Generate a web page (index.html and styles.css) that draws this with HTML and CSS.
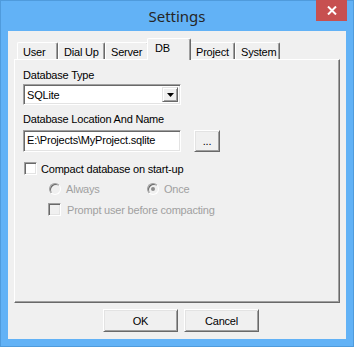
FILE: index.html
```html
<!DOCTYPE html>
<html lang="en">

<head>
  <meta charset="UTF-8">
  <title>Settings</title>
  <link rel="stylesheet" href="styles.css">
</head>

<body>
  <div class="window">
    <div class="titlebar">
      <span class="title">Settings</span>
      <div class="close">
        <svg width="10" height="9" viewBox="0 0 10 9">
          <path d="M1 0.5 L9 8.5 M9 0.5 L1 8.5" stroke="#fff" stroke-width="2" />
        </svg>
      </div>
    </div>
    <div class="client">
      <div class="tabs">
        <div class="tab tab-user">User</div>
        <div class="tab tab-dial">Dial Up</div>
        <div class="tab tab-server">Server</div>
        <div class="tab tab-db selected">DB</div>
        <div class="tab tab-project">Project</div>
        <div class="tab tab-system">System</div>
      </div>
      <div class="panel">
        <div class="label">Database Type</div>
        <div class="combo">
          <span class="combo-value">SQLite</span>
          <span class="combo-btn">
            <svg width="7" height="4" viewBox="0 0 7 4"><path d="M0 0 H7 L3.5 4 Z" fill="#000" /></svg>
          </span>
        </div>
        <div class="label label-path">Database Location And Name</div>
        <div class="path-row">
          <div class="textbox">E:\Projects\MyProject.sqlite</div>
          <div class="btn btn-browse">...</div>
        </div>
        <div class="check-row">
          <span class="checkbox"></span>
          <span>Compact database on start-up</span>
        </div>
        <div class="radio-row disabled">
          <div class="radio-item">
            <span class="radio"></span>
            <span>Always</span>
          </div>
          <div class="radio-item">
            <span class="radio checked"></span>
            <span>Once</span>
          </div>
        </div>
        <div class="check-row sub disabled">
          <span class="checkbox"></span>
          <span>Prompt user before compacting</span>
        </div>
      </div>
      <div class="buttons">
        <div class="btn btn-dialog">OK</div>
        <div class="btn btn-dialog">Cancel</div>
      </div>
    </div>
  </div>
</body>

</html>
```

FILE: styles.css
```css
body {
  margin: 0;
  font-family: 'Liberation Sans', Arial, sans-serif;
  font-size: 11px;
  letter-spacing: -0.2px;
  color: #000;
}

.window {
  width: 354px;
  height: 347px;
  box-sizing: border-box;
  border: 1px solid #4f9bdc;
  background-color: #62b2f6;
}

.titlebar {
  position: relative;
  height: 30px;
  text-align: center;
}

.title {
  font-family: 'Noto Sans', 'Open Sans', sans-serif;
  font-size: 15px;
  letter-spacing: 0;
  line-height: 30px;
  color: #262626;
}

.close {
  position: absolute;
  top: -1px;
  right: 6px;
  width: 31px;
  height: 21px;
  background-color: #c75050;
  display: flex;
  align-items: center;
  justify-content: center;
}

.client {
  margin: 0 7px;
  height: 308px;
  background-color: #f0f0f0;
}

/* Tabs */
.tabs {
  display: flex;
  align-items: flex-end;
  height: 28px;
  padding-left: 9px;
  position: relative;
  z-index: 1;
}

.tab {
  height: 17px;
  box-sizing: border-box;
  padding: 3px 0 0 5px;
  line-height: 13px;
  background-color: #f0f0f0;
  border-top: 1px solid #fff;
  border-left: 1px solid #fff;
  border-right: 1px solid #696969;
  box-shadow: inset -1px 0 0 #a0a0a0;
  border-radius: 2px 2px 0 0;
}

.tab-user { width: 41px; }
.tab-dial { width: 47px; }
.tab-server { width: 44px; }
.tab-project { width: 46px; padding-left: 6px; }
.tab-system { width: 45px; }

.tab.selected {
  width: 44px;
  height: 22px;
  margin: 0 -2px -1px;
  padding: 3px 0 0 7px;
  position: relative;
  z-index: 2;
}

/* Panel */
.panel {
  margin: 0 6px;
  height: 244px;
  box-sizing: border-box;
  padding: 9px 0 0 8px;
  border-top: 1px solid #fff;
  border-left: 1px solid #fff;
  border-right: 1px solid #696969;
  border-bottom: 1px solid #696969;
  box-shadow: inset -1px -1px 0 #a0a0a0;
}

.label {
  line-height: 13px;
  margin-bottom: 2px;
}

.label-path {
  margin-top: 8px;
  margin-bottom: 4px;
}

.combo {
  width: 158px;
  height: 21px;
  box-sizing: border-box;
  display: flex;
  align-items: center;
  background-color: #fff;
  border: 1px solid;
  border-color: #a0a0a0 #fff #fff #a0a0a0;
  box-shadow: inset 1px 1px 0 #696969, inset -1px -1px 0 #e3e3e3;
  padding: 2px;
}

.combo-value {
  flex: 1;
  padding-left: 1px;
}

.combo-btn {
  width: 16px;
  height: 15px;
  box-sizing: border-box;
  display: flex;
  align-items: center;
  justify-content: center;
  background-color: #f0f0f0;
  border: 1px solid;
  border-color: #e3e3e3 #696969 #696969 #e3e3e3;
  box-shadow: inset 1px 1px 0 #fff, inset -1px -1px 0 #a0a0a0;
}

.path-row {
  display: flex;
  align-items: center;
  gap: 13px;
}

.textbox {
  width: 158px;
  height: 22px;
  box-sizing: border-box;
  line-height: 18px;
  padding-left: 3px;
  background-color: #fff;
  border: 1px solid;
  border-color: #a0a0a0 #fff #fff #a0a0a0;
  box-shadow: inset 1px 1px 0 #696969, inset -1px -1px 0 #e3e3e3;
}

.btn {
  box-sizing: border-box;
  display: flex;
  align-items: center;
  justify-content: center;
  background-color: #f0f0f0;
  border: 1px solid;
  border-color: #fff #696969 #696969 #fff;
  box-shadow: inset 1px 1px 0 #e3e3e3, inset -1px -1px 0 #a0a0a0;
}

.btn-browse {
  width: 26px;
  height: 22px;
}

.check-row {
  display: flex;
  align-items: center;
  gap: 4px;
  height: 13px;
  margin-top: 10px;
  padding-left: 1px;
}

.checkbox {
  width: 13px;
  height: 13px;
  box-sizing: border-box;
  background-color: #fff;
  border: 1px solid;
  border-color: #a0a0a0 #fff #fff #a0a0a0;
  box-shadow: inset 1px 1px 0 #696969, inset -1px -1px 0 #e3e3e3;
}

.disabled {
  color: #a0a0a0;
}

.disabled .checkbox {
  background-color: #f0f0f0;
}

.radio-row {
  display: flex;
  height: 12px;
  margin-top: 8px;
  padding-left: 26px;
}

.radio-item {
  display: flex;
  align-items: center;
  gap: 5px;
  width: 98px;
}

.radio {
  width: 12px;
  height: 12px;
  box-sizing: border-box;
  border-radius: 50%;
  border: 1px solid;
  border-color: #a0a0a0 #fff #fff #a0a0a0;
  box-shadow: inset 1px 1px 0 #696969;
  background-color: #f0f0f0;
  display: flex;
  align-items: center;
  justify-content: center;
}

.radio.checked::after {
  content: "";
  width: 4px;
  height: 4px;
  border-radius: 50%;
  background-color: #8c8c8c;
}

.check-row.sub {
  margin-top: 8px;
  padding-left: 25px;
  gap: 6px;
}

.buttons {
  display: flex;
  gap: 6px;
  padding: 6px 0 0 95px;
}

.btn-dialog {
  width: 75px;
  height: 23px;
}
```
